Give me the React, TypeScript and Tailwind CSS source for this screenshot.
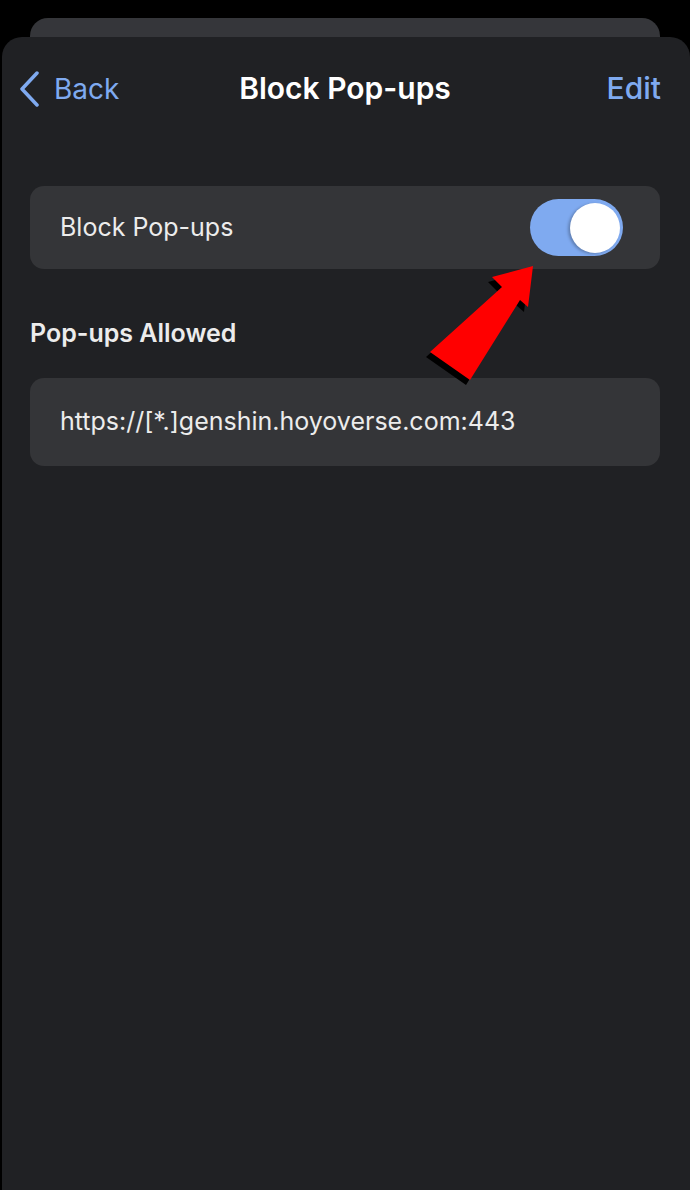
import React from 'react';

const font = { fontFamily: '"Inter", "Liberation Sans", sans-serif' };

const Toggle: React.FC = () => (
  <div className="flex h-[57px] w-[93px] items-center justify-end rounded-full bg-[#7faaf0] pr-[3px]">
    <div className="h-[50px] w-[50px] rounded-full bg-white shadow-[-2px_1px_3px_rgba(0,0,0,0.25)]" />
  </div>
);

const Arrow: React.FC = () => (
  <svg className="pointer-events-none absolute left-0 top-0" width="690" height="420" viewBox="0 0 690 420">
    <polygon
      transform="translate(-4 5)"
      points="533,266 528,307 520,300 470,380 430,352 502,287 492,277"
      fill="#000"
    />
    <polygon points="533,266 528,307 520,300 470,380 430,352 502,287 492,277" fill="#ff0000" />
  </svg>
);

export default function App() {
  return (
    <div className="relative h-[1190px] w-[690px] overflow-hidden bg-black" style={font}>
      <div className="mx-[30px] mt-[18px] h-[40px] rounded-t-[18px] bg-[#35363a]" />
      <div className="-mt-[21px] ml-[2px] h-[1153px] rounded-t-[20px] bg-[#202124]">
        <div className="grid h-[102px] grid-cols-[1fr_auto_1fr] items-center pl-[16px] pr-[18px] pt-[1px]">
          <div className="flex items-center gap-[14px] text-[#7faaf0]">
            <svg width="22" height="36" viewBox="0 0 22 36" fill="none">
              <path d="M19 2 L4 18 L19 34" stroke="currentColor" strokeWidth="3.5" strokeLinecap="round" strokeLinejoin="round" />
            </svg>
            <span className="text-[28px]">Back</span>
          </div>
          <span className="text-[30px] font-semibold text-white">Block Pop-ups</span>
          <span className="justify-self-end pr-[11px] text-[30px] font-medium text-[#7faaf0]">Edit</span>
        </div>

        <div className="pl-[28px] pr-[30px] pt-[47px]">
          <div className="flex h-[83px] items-center justify-between rounded-[14px] bg-[#343538] pl-[30px] pr-[37px]">
            <span className="text-[25px] text-[#ececec]">Block Pop-ups</span>
            <Toggle />
          </div>

          <div className="mt-[46px] text-[25px] font-semibold text-[#ececec]">Pop-ups Allowed</div>

          <div className="mt-[25px] flex h-[88px] items-center rounded-[14px] bg-[#343538] pl-[30px]">
            <span className="text-[25px] text-[#ececec]">https://[*.]genshin.hoyoverse.com:443</span>
          </div>
        </div>
      </div>
      <Arrow />
    </div>
  );
}
